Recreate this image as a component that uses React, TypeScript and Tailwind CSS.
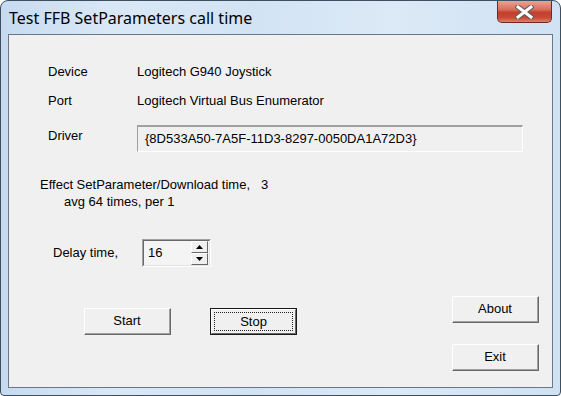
import React from "react";

function RaisedButton({ label, isDefault }: { label: string; isDefault?: boolean }) {
  if (isDefault) {
    return (
      <div className="w-[87px] h-[27px] border border-[#1a1a1a] bg-[#f0f0f0]">
        <div className="w-full h-full border-t border-l border-t-white border-l-white border-b border-r border-b-[#696969] border-r-[#696969] p-[2px]">
          <div className="w-full h-full border border-dotted border-[#222] flex items-center justify-center text-black">
            {label}
          </div>
        </div>
      </div>
    );
  }
  return (
    <div className="w-[87px] h-[27px] border-t border-l border-t-white border-l-white border-b border-r border-b-[#696969] border-r-[#696969] bg-[#f0f0f0]">
      <div className="w-full h-full border-b border-r border-b-[#a0a0a0] border-r-[#a0a0a0] flex items-center justify-center text-black">
        {label}
      </div>
    </div>
  );
}

function SpinArrow({ up }: { up?: boolean }) {
  return (
    <div className="w-[17px] h-[12px] border-t border-l border-t-white border-l-white border-b border-r border-b-[#696969] border-r-[#696969] bg-[#f0f0f0] flex items-center justify-center">
      <svg width="7" height="4" viewBox="0 0 7 4">
        {up ? <polygon points="3.5,0 7,4 0,4" fill="#000" /> : <polygon points="0,0 7,0 3.5,4" fill="#000" />}
      </svg>
    </div>
  );
}

export default function App() {
  return (
    <div className="w-[561px] h-[396px] bg-white">
      <div
        className="w-[561px] h-[396px] flex flex-col border border-[#3e4f60] rounded-t-[8px] rounded-b-[4px] px-[7px] pb-[7px] bg-[linear-gradient(90deg,#c6dbf0_0%,#dae8f6_20%,#d2e3f4_45%,#dce9f6_70%,#cfe1f3_100%)]"
        style={{ fontFamily: '"Liberation Sans", Arial, sans-serif' }}
      >
        <div className="h-[33px] flex items-start justify-between">
          <div
            className="mt-[7px] ml-[1px] text-[16px] leading-[20px] text-black"
            style={{ fontFamily: '"Noto Sans", "Open Sans", sans-serif' }}
          >
            Test FFB SetParameters call time
          </div>
          <div className="mr-[1px] w-[55px] h-[22px] rounded-b-[5px] border border-t-0 border-[#6e2a20] bg-[linear-gradient(180deg,#e9a493_0%,#d8705d_40%,#c2402e_55%,#c94a36_80%,#de826c_100%)] flex items-center justify-center">
            <svg width="19" height="14" viewBox="0 0 19 14">
              <path d="M3 2 L16 12 M16 2 L3 12" stroke="#5a5a5a" strokeWidth="5" strokeLinecap="square" />
              <path d="M3 2 L16 12 M16 2 L3 12" stroke="#ffffff" strokeWidth="3" strokeLinecap="square" />
            </svg>
          </div>
        </div>
        <div className="flex-1 border border-[#6b7785] bg-[#f0f0f0] flex flex-col text-[13px] text-black">
          <div className="pl-[39px] mt-[28px] flex flex-col">
            <div className="flex h-[18px] items-center">
              <div className="w-[89px]">Device</div>
              <div>Logitech G940 Joystick</div>
            </div>
            <div className="flex h-[18px] items-center mt-[11px]">
              <div className="w-[89px]">Port</div>
              <div>Logitech Virtual Bus Enumerator</div>
            </div>
            <div className="flex items-start mt-[15px]">
              <div className="w-[89px] h-[18px] mt-[2px] flex items-center">Driver</div>
              <div className="w-[386px] h-[27px] border-t-2 border-l border-t-[#a0a0a0] border-l-[#a0a0a0] border-b border-r border-b-white border-r-white bg-[#f0f0f0] flex items-center pl-[7px]">
                {"{8D533A50-7A5F-11D3-8297-0050DA1A72D3}"}
              </div>
            </div>
          </div>
          <div className="mt-[24px] pl-[31px] leading-[17px]">
            <div className="flex">
              <div className="w-[221px]">Effect SetParameter/Download time,</div>
              <div>3</div>
            </div>
            <div className="pl-[24px]">avg 64 times, per 1</div>
          </div>
          <div className="mt-[29px] pl-[44px] flex items-center">
            <div className="w-[89px]">Delay time,</div>
            <div className="w-[69px] h-[28px] border-t border-l border-t-[#a0a0a0] border-l-[#a0a0a0] border-b border-r border-b-white border-r-white">
              <div className="w-full h-full border-t border-l border-t-[#696969] border-l-[#696969] border-b border-r border-b-[#e3e3e3] border-r-[#e3e3e3] bg-[#f4f4f4] flex items-center justify-between pl-[4px] pr-[1px]">
                <span>16</span>
                <div className="flex flex-col gap-[0px]">
                  <SpinArrow up />
                  <SpinArrow />
                </div>
              </div>
            </div>
          </div>
          <div className="mt-[29px] flex items-start justify-between pr-[13px]">
            <div className="mt-[12px] pl-[75px] flex gap-[39px]">
              <RaisedButton label="Start" />
              <RaisedButton label="Stop" isDefault />
            </div>
            <div className="flex flex-col gap-[21px]">
              <RaisedButton label="About" />
              <RaisedButton label="Exit" />
            </div>
          </div>
        </div>
      </div>
    </div>
  );
}
